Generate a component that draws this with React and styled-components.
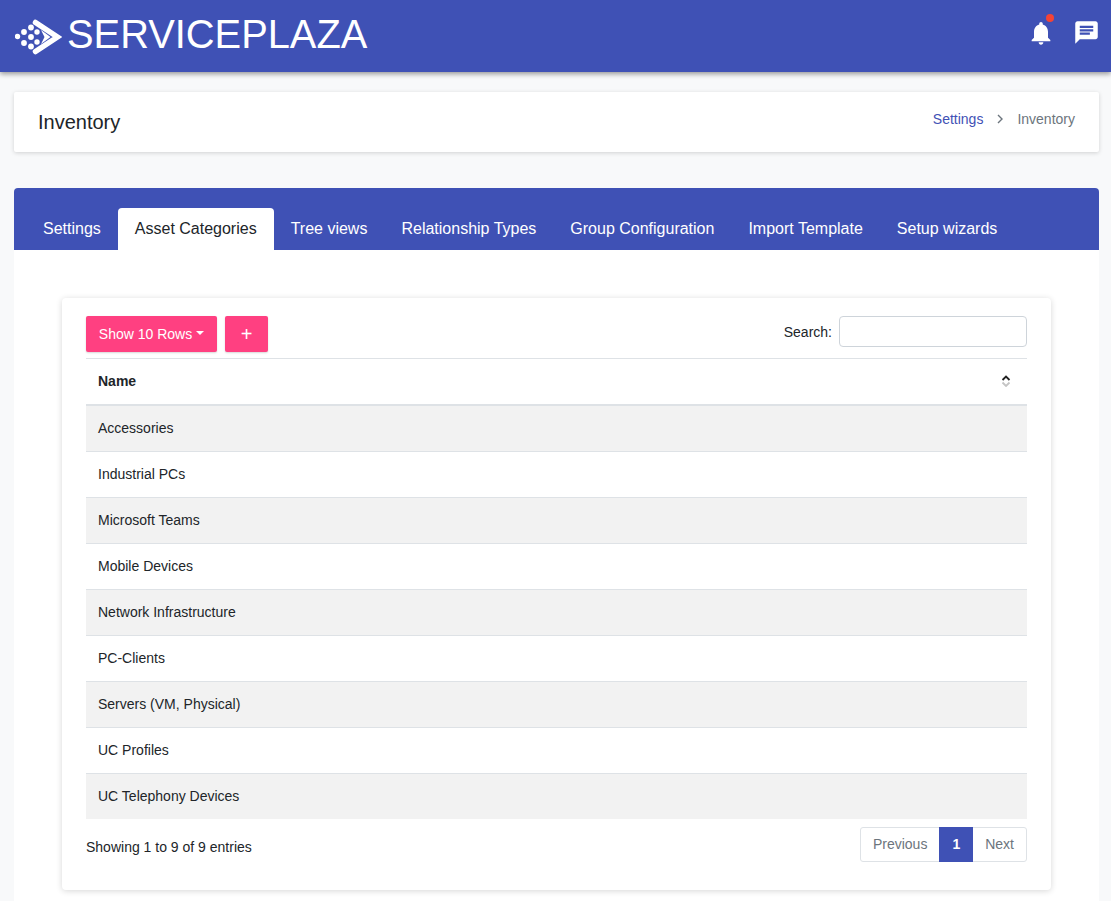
import React from 'react';
import styled, { createGlobalStyle } from 'styled-components';

const GlobalStyle = createGlobalStyle`
  html, body {
    margin: 0;
    padding: 0;
    background: #f8f9fa;
    font-family: "Liberation Sans", Arial, sans-serif;
    font-size: 14px;
    color: #212529;
  }

  * {
    box-sizing: border-box;
  }
`;

const Page = styled.div`
  height: 901px;
  overflow: hidden;
`;

const Header = styled.header`
  height: 72px;
  background: #3f51b5;
  box-shadow: 0 2px 5px rgba(0, 0, 0, 0.4);
  display: flex;
  align-items: center;
  justify-content: space-between;
  padding: 0 11px 0 15px;
  position: relative;
`;

const Brand = styled.div`
  display: flex;
  align-items: center;
  gap: 5px;
`;

const BrandName = styled.span`
  font-size: 39.85px;
  line-height: 1;
  color: #fff;
  margin-top: -2px;
`;

const HeaderIcons = styled.div`
  display: flex;
  align-items: center;
  gap: 18px;
  padding-bottom: 7px;
`;

const BellWrap = styled.div`
  position: relative;
  width: 28px;
  height: 28px;
`;

const Dot = styled.span`
  position: absolute;
  top: -5px;
  right: 1px;
  width: 8px;
  height: 8px;
  border-radius: 50%;
  background: #f44336;
`;

const Content = styled.main`
  padding: 20px 12px 0 14px;
`;

const TitleCard = styled.section`
  height: 60px;
  background: #fff;
  border-radius: 2px;
  box-shadow: 0 1px 4px rgba(0, 0, 0, 0.16);
  display: flex;
  justify-content: space-between;
  padding: 0 24px;
`;

const PageTitle = styled.h1`
  margin: 0;
  align-self: center;
  font-size: 20px;
  font-weight: 400;
  color: #212529;
`;

const Crumbs = styled.nav`
  display: flex;
  align-items: center;
  gap: 8px;
  height: 54px;
  font-size: 14px;
`;

const CrumbLink = styled.a`
  color: #3f51b5;
`;

const CrumbCurrent = styled.span`
  color: #6c757d;
`;

const TabsCard = styled.section`
  margin-top: 36px;
  background: #fff;
  border-radius: 4px 4px 0 0;
`;

const TabBar = styled.div`
  height: 62px;
  background: #3f51b5;
  border-radius: 4px 4px 0 0;
  display: flex;
  align-items: flex-end;
  padding-left: 12px;
`;

const Tab = styled.div`
  height: 42px;
  padding: 0 17px;
  display: flex;
  align-items: center;
  font-size: 16px;
  border-radius: 4px 4px 0 0;
  color: ${({ $active }) => ($active ? '#212529' : '#fff')};
  background: ${({ $active }) => ($active ? '#fff' : 'transparent')};
`;

const TabBody = styled.div`
  padding: 48px 48px 40px;
`;

const TableCard = styled.div`
  height: 592px;
  background: #fff;
  border-radius: 4px;
  box-shadow: 0 1px 6px rgba(0, 0, 0, 0.16);
  padding: 18px 24px;
`;

const Toolbar = styled.div`
  height: 36px;
  display: flex;
  justify-content: space-between;
`;

const ButtonGroup = styled.div`
  display: flex;
  gap: 8px;
`;

const PinkButton = styled.button`
  height: 36px;
  width: ${({ $width }) => $width}px;
  border: 0;
  padding: 0;
  border-radius: 2px;
  background: #ff4081;
  color: #fff;
  font-family: inherit;
  font-size: ${({ $large }) => ($large ? '20px' : '14px')};
  box-shadow: 0 1px 2px rgba(0, 0, 0, 0.16);
  display: flex;
  align-items: center;
  justify-content: center;
  gap: 4px;
`;

const Caret = styled.span`
  width: 0;
  height: 0;
  border-top: 4px solid #fff;
  border-left: 4px solid transparent;
  border-right: 4px solid transparent;
  margin-top: -2px;
`;

const SearchLabel = styled.label`
  display: flex;
  align-items: flex-start;
  gap: 7px;
  line-height: 32px;
`;

const SearchInput = styled.input`
  width: 188px;
  height: 31px;
  border: 1px solid #ced4da;
  border-radius: 4px;
  background: #fff;
`;

const Table = styled.table`
  width: 100%;
  margin-top: 6px;
  border-collapse: separate;
  border-spacing: 0;
  border-top: 1px solid #dee2e6;
`;

const HeadCell = styled.th`
  height: 47px;
  padding: 0 12px 1px;
  text-align: left;
  font-weight: 700;
  font-size: 14px;
  border-bottom: 2px solid #dee2e6;
`;

const HeadInner = styled.div`
  display: flex;
  align-items: center;
  justify-content: space-between;
  padding-right: 4px;
`;

const Cell = styled.td`
  height: ${({ $first }) => ($first ? '45px' : '46px')};
  padding: 0 12px 1px;
  border-top: ${({ $first }) => ($first ? '0' : '1px solid #dee2e6')};
  background: ${({ $odd }) => ($odd ? '#f2f2f2' : '#fff')};
`;

const Footer = styled.div`
  margin-top: 8px;
  display: flex;
  justify-content: space-between;
  align-items: flex-start;
`;

const Info = styled.div`
  padding-top: 12px;
`;

const Pager = styled.div`
  height: 35px;
  display: flex;
  border: 1px solid #dee2e6;
  border-radius: 3px;
`;

const PageItem = styled.span`
  padding: ${({ $active }) => ($active ? '0 13px 1px' : '0 12px 1px')};
  margin: ${({ $active }) => ($active ? '-1px 0' : '0')};
  display: flex;
  align-items: center;
  color: ${({ $active }) => ($active ? '#fff' : '#6c757d')};
  background: ${({ $active }) => ($active ? '#3f51b5' : 'transparent')};
  font-weight: ${({ $active }) => ($active ? 700 : 400)};
`;

const Logo = () => (
  <svg width="47" height="37" viewBox="15 15 47 37" fill="#fff">
    <path d="M35.5 19.5 L57.5 34 L35.5 48.5" fill="none" stroke="#fff" strokeWidth="5.5" strokeLinejoin="miter" strokeLinecap="round" />
    <path d="M41 27 L50.5 34 L41 41 L44.5 34 Z" />
    <circle cx="17.5" cy="33.5" r="2.7" />
    <circle cx="24" cy="29" r="2.9" />
    <circle cx="24" cy="40" r="2.9" />
    <circle cx="31" cy="24.5" r="2.9" />
    <circle cx="31" cy="34" r="2.9" />
    <circle cx="31" cy="43.5" r="2.9" />
    <circle cx="37" cy="29" r="2.7" />
    <circle cx="37" cy="39" r="2.7" />
  </svg>
);

const BellIcon = () => (
  <svg width="28" height="28" viewBox="0 0 24 24" fill="#fff">
    <path d="M12 22c1.1 0 2-.9 2-2h-4c0 1.1.9 2 2 2zm6-6v-5c0-3.07-1.63-5.64-4.5-6.32V4c0-.83-.67-1.5-1.5-1.5s-1.5.67-1.5 1.5v.68C7.64 5.36 6 7.92 6 11v5l-2 2v1h16v-1l-2-2z" />
  </svg>
);

const MessageIcon = () => (
  <svg width="27" height="27" viewBox="0 0 24 24" fill="#fff">
    <path d="M20 2H4c-1.1 0-2 .9-2 2v18l4-4h14c1.1 0 2-.9 2-2V4c0-1.1-.9-2-2-2zM6 14v-2h9v2H6zm12-3H6V9h12v2zm0-3H6V6h12v2z" fillRule="evenodd" />
  </svg>
);

const SortIcon = () => (
  <svg width="10" height="12" viewBox="0 0 10 12" fill="none" strokeWidth="1.8">
    <path d="M1.5 5 L5 1.5 L8.5 5" stroke="#222" />
    <path d="M1.5 7.5 L5 11 L8.5 7.5" stroke="#c4c4c4" />
  </svg>
);

const ChevronIcon = () => (
  <svg width="18" height="18" viewBox="0 0 18 18" fill="none" stroke="#6c757d" strokeWidth="1.4">
    <path d="M7 5 L11 9 L7 13" />
  </svg>
);

const tabs = ['Settings', 'Asset Categories', 'Tree views', 'Relationship Types', 'Group Configuration', 'Import Template', 'Setup wizards'];

const rows = ['Accessories', 'Industrial PCs', 'Microsoft Teams', 'Mobile Devices', 'Network Infrastructure', 'PC-Clients', 'Servers (VM, Physical)', 'UC Profiles', 'UC Telephony Devices'];

const App = () => (
  <Page>
    <GlobalStyle />
    <Header>
      <Brand>
        <Logo />
        <BrandName>SERVICEPLAZA</BrandName>
      </Brand>
      <HeaderIcons>
        <BellWrap>
          <BellIcon />
          <Dot />
        </BellWrap>
        <MessageIcon />
      </HeaderIcons>
    </Header>
    <Content>
      <TitleCard>
        <PageTitle>Inventory</PageTitle>
        <Crumbs>
          <CrumbLink>Settings</CrumbLink>
          <ChevronIcon />
          <CrumbCurrent>Inventory</CrumbCurrent>
        </Crumbs>
      </TitleCard>
      <TabsCard>
        <TabBar>
          {tabs.map(tab => (
            <Tab key={tab} $active={tab === 'Asset Categories'}>{tab}</Tab>
          ))}
        </TabBar>
        <TabBody>
          <TableCard>
            <Toolbar>
              <ButtonGroup>
                <PinkButton $width={131}>Show 10 Rows <Caret /></PinkButton>
                <PinkButton $width={43} $large>+</PinkButton>
              </ButtonGroup>
              <SearchLabel>
                Search:
                <SearchInput type="text" />
              </SearchLabel>
            </Toolbar>
            <Table>
              <thead>
                <tr>
                  <HeadCell>
                    <HeadInner>Name <SortIcon /></HeadInner>
                  </HeadCell>
                </tr>
              </thead>
              <tbody>
                {rows.map((row, i) => (
                  <tr key={row}>
                    <Cell $first={i === 0} $odd={i % 2 === 0}>{row}</Cell>
                  </tr>
                ))}
              </tbody>
            </Table>
            <Footer>
              <Info>Showing 1 to 9 of 9 entries</Info>
              <Pager>
                <PageItem>Previous</PageItem>
                <PageItem $active>1</PageItem>
                <PageItem>Next</PageItem>
              </Pager>
            </Footer>
          </TableCard>
        </TabBody>
      </TabsCard>
    </Content>
  </Page>
);

export default App;
